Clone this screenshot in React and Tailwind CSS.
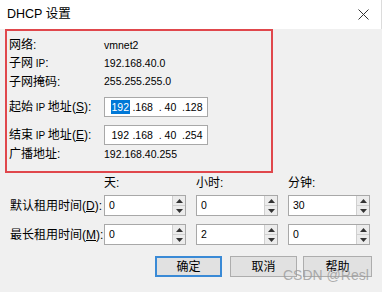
import React from "react";

const FONT = { fontFamily: '"Liberation Sans","Noto Sans CJK SC",sans-serif' };

function Row({ label, value }) {
  return (
    <div className="flex items-center h-[18px]">
      <div className="w-[97px] pl-[2px] text-[12px] leading-none text-black whitespace-nowrap">{label}</div>
      <div className="text-[10.5px] leading-none text-black">{value}</div>
    </div>
  );
}

function IpRow({ label, rest, className }) {
  return (
    <div className={"flex items-center h-[20px] " + (className || "")}>
      <div className="w-[97px] pl-[2px] text-[12px] leading-none text-black whitespace-nowrap">{label}</div>
      <div className="w-[104px] h-[20px] bg-white border border-[#a8a8a8] flex items-center pl-[6px] text-[10.5px] leading-none text-black overflow-hidden">
        {rest.hl ? (
          <span className="bg-[#0078d7] text-white px-[0.5px] py-[2px]">192</span>
        ) : (
          <span className="px-[0.5px]">192</span>
        )}
        <span className="whitespace-pre">{rest.text}</span>
      </div>
    </div>
  );
}

function Tri({ up }) {
  return (
    <svg width="7" height="4" viewBox="0 0 7 4">
      {up ? <path d="M0 4 L3.5 0 L7 4 Z" fill="#333" /> : <path d="M0 0 L3.5 4 L7 0 Z" fill="#333" />}
    </svg>
  );
}

function Spinner({ value }) {
  return (
    <div className="w-[82px] h-[21px] bg-white border border-[#a8a8a8] flex">
      <div className="flex-1 flex items-center pl-[4px] text-[10.5px] leading-none text-black">{value}</div>
      <div className="w-[13px] flex flex-col border-l border-[#d0d0d0] bg-[#ececec]">
        <div className="flex-1 flex items-center justify-center border-b border-[#d0d0d0]">
          <Tri up />
        </div>
        <div className="flex-1 flex items-center justify-center">
          <Tri />
        </div>
      </div>
    </div>
  );
}

function Lbl({ pre, mid, letter, post }) {
  return (
    <span>
      {pre}
      {mid ? <span className="text-[10px]"> {mid} </span> : null}
      {post}(<span className="underline">{letter}</span>):
    </span>
  );
}

export default function App() {
  return (
    <div className="w-[382px] h-[292px] bg-[#f0f0f0] relative overflow-hidden" style={FONT}>
      {/* title bar */}
      <div className="h-[29px] bg-white flex items-center justify-between pl-[7px] pr-[12px] border-r border-[#dcdcdc]">
        <div className="text-[12.5px] leading-none text-black">DHCP 设置</div>
        <svg width="11" height="11" viewBox="0 0 11 11">
          <path d="M0.5 0.5 L10.5 10.5 M10.5 0.5 L0.5 10.5" stroke="#333" strokeWidth="1" />
        </svg>
      </div>

      {/* red highlighted section */}
      <div className="ml-[5px] w-[268px] h-[144px] border-2 border-[#e0474c] pt-[5px]">
        <Row label="网络:" value="vmnet2" />
        <Row label={<span>子网<span className="text-[10px]"> IP</span>:</span>} value="192.168.40.0" />
        <div className="flex items-center h-[19px]">
          <div className="w-[97px] pl-[2px] text-[12px] leading-none text-black">子网掩码:</div>
          <div className="text-[10.5px] leading-none text-black">255.255.255.0</div>
        </div>
        <IpRow
          className="mt-[6px]"
          label={<Lbl pre="起始" mid="IP" post="地址" letter="S" />}
          rest={{ hl: true, text: " .168  . 40  .128" }}
        />
        <IpRow
          className="mt-[8px]"
          label={<Lbl pre="结束" mid="IP" post="地址" letter="E" />}
          rest={{ hl: false, text: " .168  . 40  .254" }}
        />
        <Row label="广播地址:" value="192.168.40.255" />
      </div>

      {/* lease section */}
      <div className="flex items-center h-[20px] pl-[104px] text-[12px] leading-none text-black">
        <div className="w-[92px]">天:</div>
        <div className="w-[92px]">小时:</div>
        <div>分钟:</div>
      </div>
      <div className="flex items-center mt-[2px] pl-[10px]">
        <div className="w-[94px] text-[12px] leading-none text-black whitespace-nowrap">
          默认租用时间(<span className="underline">D</span>):
        </div>
        <div className="flex gap-[10px]">
          <Spinner value="0" />
          <Spinner value="0" />
          <Spinner value="30" />
        </div>
      </div>
      <div className="flex items-center mt-[8px] pl-[10px]">
        <div className="w-[94px] text-[12px] leading-none text-black whitespace-nowrap">
          最长租用时间(<span className="underline">M</span>):
        </div>
        <div className="flex gap-[10px]">
          <Spinner value="0" />
          <Spinner value="2" />
          <Spinner value="0" />
        </div>
      </div>

      {/* buttons */}
      <div className="flex mt-[11px] pl-[155px]">
        <div className="w-[67px] h-[21px] border-2 border-[#3a8ad6] bg-[#e1e1e1] flex items-center justify-center text-[12px] leading-none text-black">
          确定
        </div>
        <div className="ml-[8px] w-[67px] h-[21px] border border-[#adadad] bg-[#e1e1e1] flex items-center justify-center text-[12px] leading-none text-black">
          取消
        </div>
        <div className="ml-[6px] w-[69px] h-[21px] border border-[#adadad] bg-[#e1e1e1] flex items-center justify-center text-[12px] leading-none text-black">
          帮助
        </div>
      </div>

      {/* watermark */}
      <div className="absolute left-[283px] top-[268px] text-[14px] leading-none text-[#9a9a9a]/80 whitespace-nowrap">
        CSDN @Resl
      </div>
    </div>
  );
}
